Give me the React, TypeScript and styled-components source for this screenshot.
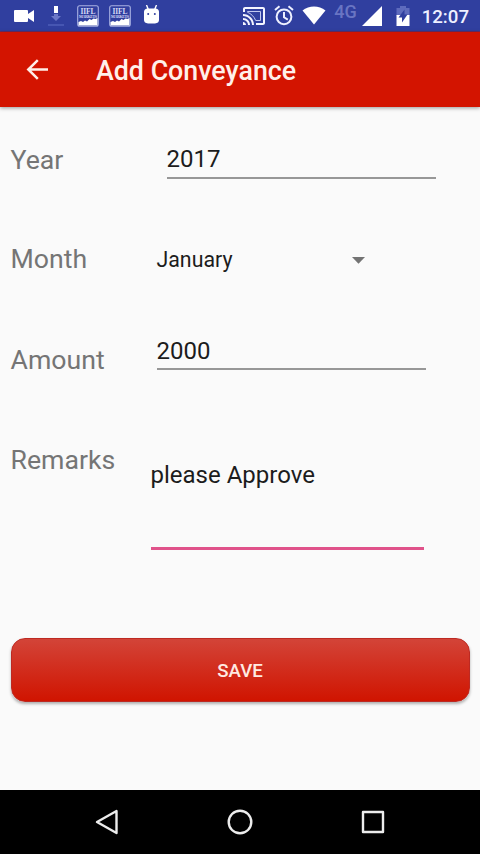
import type { ReactNode } from 'react';
import styled, { createGlobalStyle } from 'styled-components';

const GlobalStyle = createGlobalStyle`
  * {
    box-sizing: border-box;
  }

  body {
    margin: 0;
    background: #fafafa;
    font-family: Roboto, 'Liberation Sans', sans-serif;
  }
`;

function App() {
  return (
    <>
      <GlobalStyle />
      <Screen>
        <StatusBar />
        <Toolbar>
          <BackIcon />
          <Title>Add Conveyance</Title>
        </Toolbar>
        <Form>
          <FormRow label="Year" height={99}>
            <Field $left={156} $top={1} $width={269} $height={34}>
              <Value>2017</Value>
            </Field>
          </FormRow>
          <FormRow label="Month" height={101}>
            <Spinner>
              January
              <Caret viewBox="0 0 13 7">
                <path d="M0 0h13L6.500 6.700z" fill="#737373" />
              </Caret>
            </Spinner>
          </FormRow>
          <FormRow label="Amount" height={100}>
            <Field $left={146} $top={-7} $width={269} $height={33}>
              <Value>2000</Value>
            </Field>
          </FormRow>
          <FormRow label="Remarks" height={100}>
            <Field $left={140} $top={17} $width={273} $height={89} $focused>
              <Value>please Approve</Value>
            </Field>
          </FormRow>
          <SaveButton>SAVE</SaveButton>
        </Form>
        <NavigationBar />
      </Screen>
    </>
  );
}

const Screen = styled.div`
  display: flex;
  flex-direction: column;
  width: 480px;
  height: 854px;
  background: #fafafa;
  overflow: hidden;
`;

const Toolbar = styled.header`
  display: flex;
  flex: none;
  align-items: center;
  height: 75px;
  padding: 1px 0 0 26px;
  background: #d31400;
  box-shadow: 0 1px 4px rgba(0, 0, 0, 0.4);
`;

const Title = styled.h1`
  margin: 2px 0 0 47px;
  color: #fff0ea;
  font-size: 26.8px;
  font-weight: 500;
  line-height: 32px;
`;

function BackIcon() {
  return (
    <svg width="23" height="22" viewBox="0 0 23 22">
      <path
        d="M22 10.500H2.500M11.800 1.200 2.300 10.500l9.500 9.300"
        fill="none"
        stroke="#ffeee8"
        strokeWidth="2.500"
      />
    </svg>
  );
}

const Form = styled.main`
  flex: 1;
  padding: 37px 10.5px 0;
`;

interface FormRowProps {
  label: string;
  height: number;
  children: ReactNode;
}

function FormRow({ label, height, children }: FormRowProps) {
  return (
    <Row $height={height}>
      <Label>{label}</Label>
      {children}
    </Row>
  );
}

const Row = styled.div<{ $height: number }>`
  display: grid;
  grid-template-columns: 0 1fr;
  align-items: start;
  height: ${({ $height }) => $height}px;
`;

const Label = styled.label`
  color: #757575;
  font-size: 26.67px;
  line-height: 32px;
  white-space: nowrap;
`;

interface FieldProps {
  $left: number;
  $top: number;
  $width: number;
  $height: number;
  $focused?: boolean;
}

const Field = styled.div<FieldProps>`
  width: ${({ $width }) => $width}px;
  height: ${({ $height }) => $height}px;
  margin: ${({ $top, $left }) => `${$top}px 0 0 ${$left}px`};
  border-bottom: ${({ $focused }) =>
    $focused ? '3px solid #e0528a' : '2px solid #979797'};
`;

const Value = styled.div`
  color: #1c1c1c;
  font-size: 24px;
  line-height: 29px;
`;

const Spinner = styled.div`
  display: flex;
  align-items: center;
  justify-content: space-between;
  width: 208px;
  margin: 4px 0 0 146px;
  color: #1c1c1c;
  font-size: 21.33px;
  line-height: 26px;
`;

const Caret = styled.svg`
  width: 13px;
  height: 7px;
`;

const SaveButton = styled.button`
  display: block;
  width: 459px;
  height: 64px;
  margin-top: 94px;
  padding: 2px 0 0;
  border: 1px solid #bd2922;
  border-radius: 14px;
  background: linear-gradient(#d34438, #d01400);
  box-shadow: 0 2px 3px rgba(0, 0, 0, 0.3);
  color: #ffeae2;
  font-family: inherit;
  font-size: 18.67px;
  font-weight: 500;
`;

function StatusBar() {
  return (
    <Status>
      <Notifications>
        <svg width="21" height="14" viewBox="0 0 21 14">
          <path
            d="M2 1h12q1 0 1 1v3l6-4v12l-6-4v3q0 1-1 1H2q-1 0-1-1V2q0-1 1-1z"
            fill="#fff"
          />
        </svg>
        <DownloadIcon width="16" height="22" viewBox="0 0 16 22">
          <path d="M6 1h4v7H6z" fill="#fff" />
          <path d="M6 9h4v2h3l-5 5-5-5h3z" fill="#6c78c8" />
          <path d="M0 19h16v2H0z" fill="#4656b2" />
        </DownloadIcon>
        <MarketsIcon />
        <MarketsIcon />
        <DebugIcon width="17" height="20" viewBox="0 0 17 20">
          <path d="M3.500 0l2 5M13.500 0l-2 5" stroke="#fff" strokeWidth="1.400" />
          <path
            d="M1 7q0-3 3-3.500h9q3 .5 3 3.500v8q0 3-4 3.500H5Q1 18 1 15z"
            fill="#fff"
          />
          <circle cx="5.200" cy="9" r="1" fill="#303f9f" />
          <circle cx="11.800" cy="9" r="1" fill="#303f9f" />
        </DebugIcon>
      </Notifications>
      <Indicators>
        <CastIcon width="24" height="24" viewBox="0 0 24 24">
          <path
            d="M1 18v3h3c0-1.660-1.340-3-3-3zM1 14v2c2.760 0 5 2.240 5 5h2c0-3.870-3.130-7-7-7zM1 10v2c4.970 0 9 4.030 9 9h2c0-6.080-4.930-11-11-11zM21 3H3c-1.100 0-2 .9-2 2v3h2V5h18v14h-7v2h7c1.100 0 2-.9 2-2V5c0-1.100-.9-2-2-2z"
            fill="#f4f5ff"
          />
          <path
            d="M5.500 7.500h13v9h-4.800C12 12.500 9 9.500 5.500 8.300z"
            fill="none"
            stroke="#c2c8f0"
          />
        </CastIcon>
        <AlarmIcon width="20" height="21" viewBox="0 0 20 21">
          <g fill="none" stroke="#eef0ff" strokeWidth="2">
            <circle cx="10" cy="11.800" r="7.400" />
            <path d="M10 7v5.300l3.800 2.300M1 5l4.500-3.800M19 5l-4.500-3.800" />
          </g>
        </AlarmIcon>
        <WifiIcon width="24" height="19" viewBox="0 0 24 19">
          <path d="M.5 4.500C7-.8 17-.8 23.500 4.500L12 18.500z" fill="#fff" />
        </WifiIcon>
        <Network>4G</Network>
        <SignalIcon width="20" height="20" viewBox="0 0 20 20">
          <path d="M20 0v20H0z" fill="#fff" />
        </SignalIcon>
        <BatteryIcon width="14" height="20" viewBox="0 0 14 20">
          <path d="M4 0h6v2h3.500v8H.5V2H4z" fill="#5e6bbd" />
          <path d="M.5 9h13v11H.5z" fill="#fff" />
          <path d="M8.500 3.500v5h3L6 16.500v-5H2.500z" fill="#303f9f" />
        </BatteryIcon>
        <Clock>12:07</Clock>
      </Indicators>
    </Status>
  );
}

function MarketsIcon() {
  return (
    <Markets width="22" height="22" viewBox="0 0 22 22">
      <rect
        x=".7"
        y=".7"
        width="20.600"
        height="20.600"
        rx="2"
        fill="#303f9f"
        stroke="#a9b1e2"
        strokeWidth="1.100"
      />
      <text x="11" y="8.500" fontSize="7.500" textLength="15">
        IIFL
      </text>
      <text x="11" y="12.800" fontSize="4" textLength="18">
        MARKETS
      </text>
      <path
        d="M1.500 20.500v-3.500l2.500-1 2 1 2-1.500 2 1 2.500-2.500 2 1 2-1.500 2 .5 2-1v7.500z"
        fill="#fff"
      />
    </Markets>
  );
}

const Status = styled.div`
  display: flex;
  flex: none;
  justify-content: space-between;
  height: 32px;
  padding: 0 11px 0 13px;
  background: #303f9f;
  border-bottom: 1px solid #6d2c61;
`;

const Notifications = styled.div`
  display: flex;
  align-items: center;
`;

const DownloadIcon = styled.svg`
  margin-left: 14px;
`;

const Markets = styled.svg`
  margin-left: 13px;

  & + & {
    margin-left: 10px;
  }

  text {
    fill: #d5d9f5;
    font-family: 'Liberation Serif', serif;
    font-weight: 700;
    text-anchor: middle;
  }
`;

const DebugIcon = styled.svg`
  margin-left: 12px;
  margin-bottom: 1px;
`;

const Indicators = styled.div`
  display: flex;
  align-items: center;
`;

const CastIcon = styled.svg`
  margin-top: 1px;
`;

const AlarmIcon = styled.svg`
  margin-left: 8px;
`;

const WifiIcon = styled.svg`
  margin-left: 8px;
`;

const Network = styled.span`
  margin: 0 1px 8px 8px;
  color: #6975c3;
  font-size: 18px;
  font-weight: 500;
`;

const SignalIcon = styled.svg`
  margin-left: 4px;
`;

const BatteryIcon = styled.svg`
  margin-left: 14px;
`;

const Clock = styled.span`
  margin: 2px 0 0 12px;
  color: #eef0ff;
  font-size: 18.67px;
  font-weight: 500;
`;

function NavigationBar() {
  return (
    <NavBar>
      <svg width="24" height="26" viewBox="0 0 24 26">
        <path d="M21.500 2v22L2 13z" />
      </svg>
      <svg width="26" height="26" viewBox="0 0 26 26">
        <circle cx="13" cy="13" r="11.300" />
      </svg>
      <svg width="24" height="24" viewBox="0 0 24 24">
        <rect x="2" y="2" width="20" height="20" />
      </svg>
    </NavBar>
  );
}

const NavBar = styled.nav`
  display: flex;
  flex: none;
  align-items: center;
  justify-content: space-between;
  height: 64px;
  padding: 0 95px;
  background: #000;

  svg {
    fill: none;
    stroke: #ececec;
    stroke-width: 2.4;
    stroke-linejoin: round;
  }
`;

export default App;
